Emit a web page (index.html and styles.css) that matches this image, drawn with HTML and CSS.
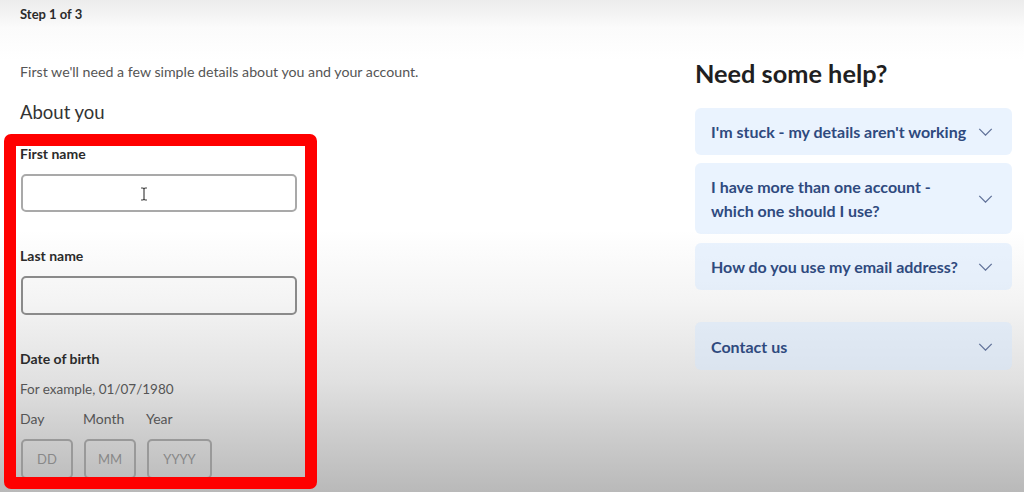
FILE: index.html
```html
<!DOCTYPE html>
<html lang="en">
<head>
<meta charset="UTF-8">
<meta name="viewport" content="width=device-width, initial-scale=1.0">
<title>Step 1 of 3 - About you</title>
<link rel="stylesheet" href="styles.css">
</head>
<body>

<div class="step">Step 1 of 3</div>

<div class="page">

    <div class="form-col">
        <p class="intro">First we'll need a few simple details about you and your account.</p>
        <h2 class="section-title">About you</h2>

        <!-- highlighted area -->
        <div class="frame">
            <div class="field">
                <label class="label">First name</label>
                <div class="input-wrap">
                    <input class="input" type="text">
                    <svg class="ibeam" width="8" height="14" viewBox="0 0 8 14">
                        <path d="M1 1h2l1 1 1-1h2M4 2v10M1 13h2l1-1 1 1h2" fill="none" stroke="#444" stroke-width="1.2"/>
                    </svg>
                </div>
            </div>

            <div class="field">
                <label class="label">Last name</label>
                <input class="input dark" type="text">
            </div>

            <div class="field dob">
                <label class="label">Date of birth</label>
                <div class="hint">For example, 01/07/1980</div>
                <div class="date-row">
                    <div class="date-part">
                        <span>Day</span>
                        <input class="date-input" placeholder="DD">
                    </div>
                    <div class="date-part">
                        <span>Month</span>
                        <input class="date-input" placeholder="MM">
                    </div>
                    <div class="date-part">
                        <span>Year</span>
                        <input class="date-input year" placeholder="YYYY">
                    </div>
                </div>
            </div>
        </div>
    </div>

    <div class="help-col">
        <h2 class="help-title">Need some help?</h2>

        <div class="acc">
            <div class="acc-item">
                <span>I'm stuck - my details aren't working</span>
                <svg class="chev" viewBox="0 0 16 9"><path d="M1 1l7 7 7-7"/></svg>
            </div>
            <div class="acc-item">
                <span>I have more than one account -<br>which one should I use?</span>
                <svg class="chev" viewBox="0 0 16 9"><path d="M1 1l7 7 7-7"/></svg>
            </div>
            <div class="acc-item">
                <span>How do you use my email address?</span>
                <svg class="chev" viewBox="0 0 16 9"><path d="M1 1l7 7 7-7"/></svg>
            </div>
        </div>

        <div class="acc-item contact">
            <span>Contact us</span>
            <svg class="chev" viewBox="0 0 16 9"><path d="M1 1l7 7 7-7"/></svg>
        </div>
    </div>

</div>

</body>
</html>
```

FILE: styles.css
```css
html {
    height: 100%;
    background: linear-gradient(to bottom,
        #ececec 0px, #fbfbfb 28px, #fff 60px, #fff 230px,
        #f4f4f4 300px, #e1e1e1 380px, #cdcdcd 435px, #b9b9b9 492px);
}

body {
    margin: 0;
    height: 100%;
    overflow: hidden;
    font-family: "Lato", "Noto Sans", sans-serif;
    color: #333;
}

.step {
    padding: 6px 20px 0;
    font-size: 13px;
    font-weight: 700;
    line-height: 16px;
    color: #2b2b2b;
}

.page {
    display: grid;
    grid-template-columns: 1fr 317px;
    margin-top: 36px;
    padding: 0 12px 0 20px;
}

/* left */
.form-col {
    padding-top: 4px;
}

.intro {
    margin: 0;
    font-size: 14.2px;
    line-height: 20px;
    color: #555;
}

.section-title {
    margin: 17px 0 9px;
    font-size: 18.5px;
    font-weight: 400;
    line-height: 26px;
    color: #333;
}

.frame {
    margin-left: -16px;
    width: 284px;
    height: 331px;
    padding-left: 5px;
    border: 12px solid #ff0000;
    border-radius: 7px;
    overflow: hidden;
}

.field {
    display: flex;
    flex-direction: column;
    margin-bottom: 36px;
}

.label {
    font-size: 14px;
    font-weight: 700;
    line-height: 16px;
    color: #2b2b2b;
    margin-bottom: 12px;
    margin-left: -1px;
}

.input-wrap {
    position: relative;
}

.input {
    box-sizing: border-box;
    width: 276px;
    height: 38px;
    margin: 0;
    border: 2px solid #a9a9a9;
    border-radius: 5px;
    background: transparent;
}

.input.dark {
    height: 39px;
    border-color: #8a8a8a;
}

.ibeam {
    position: absolute;
    left: 119px;
    top: 13px;
}

.hint {
    margin-left: -1px;
    font-size: 13.5px;
    line-height: 20px;
    color: #555;
    margin-bottom: 10px;
}

.date-row {
    display: flex;
    gap: 11px;
}

.date-part {
    display: flex;
    flex-direction: column;
    gap: 10px;
    font-size: 14px;
    line-height: 20px;
    color: #555;
}

.date-part span {
    margin-left: -1px;
}

.date-input {
    box-sizing: border-box;
    width: 52px;
    height: 40px;
    margin: 0;
    padding: 0;
    border: 2px solid #999;
    border-radius: 5px;
    background: transparent;
    text-align: center;
    font-family: inherit;
    font-size: 13px;
}

.date-input.year {
    width: 65px;
}

.date-input::placeholder {
    color: #888;
}

/* right */
.help-title {
    margin: 0 0 20px;
    font-size: 25.3px;
    font-weight: 700;
    line-height: 30px;
    color: #1f1f22;
}

.acc {
    display: flex;
    flex-direction: column;
    gap: 8px;
}

.acc-item {
    display: flex;
    align-items: center;
    justify-content: space-between;
    padding: 12px 19px 12px 16px;
    border-radius: 6px;
    background: rgba(208, 229, 252, 0.45);
    font-size: 16px;
    font-weight: 700;
    line-height: 23px;
    color: #2f4a7e;
}

.acc-item:nth-child(2) {
    line-height: 23.5px;
}

.acc-item:nth-child(3) {
    margin-top: 1px;
}

.acc-item.contact {
    margin-top: 32px;
    padding-top: 13px;
    padding-bottom: 12px;
}

.chev {
    width: 15px;
    height: 8px;
    flex: none;
    fill: none;
    stroke: #62739a;
    stroke-width: 1.5;
}
```
